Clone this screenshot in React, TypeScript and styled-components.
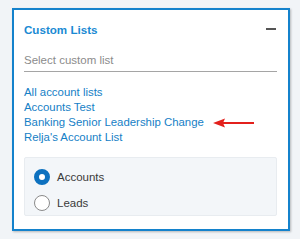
import React from "react";
import styled, { createGlobalStyle } from "styled-components";

const Global = createGlobalStyle`
  html, body { margin: 0; padding: 0; background: #f1f4f7; }
  body { font-family: "Liberation Sans", Arial, sans-serif; }
`;

const Page = styled.div`
  width: 300px;
  height: 239px;
  padding: 8px 0 0 12px;
  box-sizing: border-box;
`;

const Card = styled.section`
  width: 278px;
  height: 223px;
  box-sizing: border-box;
  background: #fff;
  border: 2px solid #1482cc;
  box-shadow: 1px 1px 2px rgba(0, 0, 0, 0.25);
  padding: 11px 11px 0 10px;
  display: flex;
  flex-direction: column;
`;

const Header = styled.div`
  display: flex;
  align-items: center;
  justify-content: space-between;
  height: 16px;
`;

const Title = styled.h2`
  margin: 0;
  font-size: 11.6px;
  font-weight: 700;
  color: #1a8ad3;
`;

const Minus = styled.span`
  width: 10px;
  height: 2px;
  background: #555;
  margin-right: 1px;
`;

const Select = styled.div`
  margin-top: 14px;
  height: 20px;
  border-bottom: 1.5px solid #a5a5a5;
  font-size: 11.5px;
  color: #8b8b8b;
  line-height: 18px;
`;

const Links = styled.ul`
  list-style: none;
  margin: 13px 0 0;
  padding: 0;
`;

const LinkItem = styled.li`
  font-size: 11.4px;
  line-height: 15px;
  color: #1580c6;
  display: flex;
  align-items: center;
`;

const Arrow = styled.svg`
  margin-left: 9px;
`;

const RadioBox = styled.div`
  margin-top: 12px;
  background: #f3f6f9;
  border: 1px solid #e8ecf0;
  border-radius: 2px;
  height: 59px;
  box-sizing: border-box;
  padding: 10px 0 0 9px;
  display: flex;
  flex-direction: column;
  gap: 9px;
`;

const RadioRow = styled.label`
  display: flex;
  align-items: center;
  gap: 7px;
  font-size: 11.5px;
  color: #3a3a3a;
  height: 17px;
`;

const Dot = styled.span<{ $on?: boolean }>`
  width: 16px;
  height: 16px;
  border-radius: 50%;
  box-sizing: border-box;
  background: #fff;
  border: ${(p) => (p.$on ? "5px solid #0d71bf" : "1px solid #8a8a8a")};
`;

export default function App() {
  return (
    <>
      <Global />
      <Page>
        <Card>
          <Header>
            <Title>Custom Lists</Title>
            <Minus />
          </Header>
          <Select>Select custom list</Select>
          <Links>
            <LinkItem>All account lists</LinkItem>
            <LinkItem>Accounts Test</LinkItem>
            <LinkItem>
              Banking Senior Leadership Change
              <Arrow width="42" height="10" viewBox="0 0 42 10">
                <path d="M10 5 H41" stroke="#e3201c" strokeWidth="2" />
                <path d="M0 5 L12 0.5 L10 5 L12 9.5 Z" fill="#e3201c" />
              </Arrow>
            </LinkItem>
            <LinkItem>Relja's Account List</LinkItem>
          </Links>
          <RadioBox>
            <RadioRow>
              <Dot $on />
              Accounts
            </RadioRow>
            <RadioRow>
              <Dot />
              Leads
            </RadioRow>
          </RadioBox>
        </Card>
      </Page>
    </>
  );
}
